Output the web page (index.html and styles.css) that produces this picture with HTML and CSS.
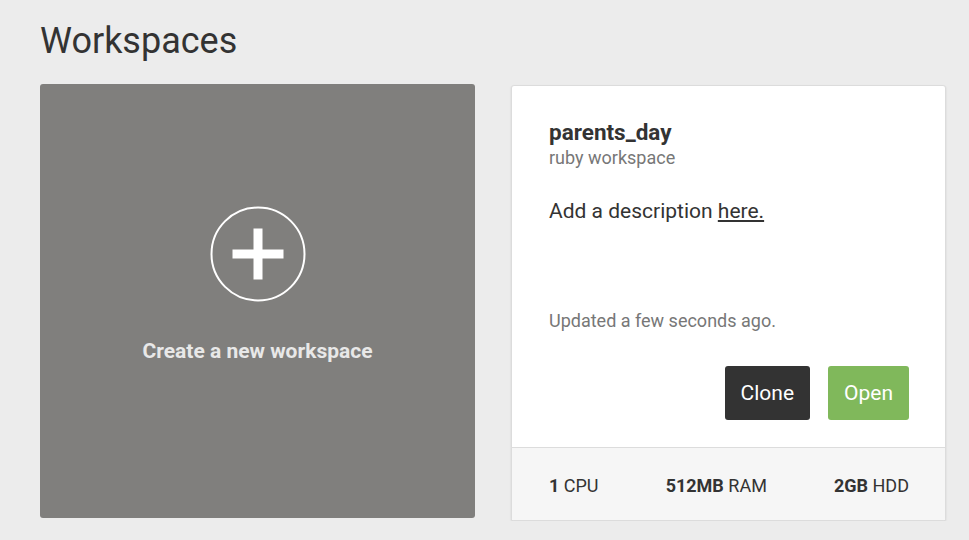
FILE: index.html
```html
<!DOCTYPE html>
<html lang="en">
  <head>
    <meta charset="UTF-8" />
    <meta name="viewport" content="width=device-width, initial-scale=1.0" />
    <title>Workspaces</title>
    <link rel="stylesheet" href="styles.css">
  </head>
  <body>
    <div class="page">
      <h1>Workspaces</h1>
      <div class="ws-grid">
        <a class="ws-new" href="#">
          <svg class="ws-new-icon" width="96" height="96" viewBox="0 0 96 96">
            <circle cx="48" cy="48" r="46.5" fill="none" stroke="#fff" stroke-width="2" />
            <rect x="22.5" y="43.5" width="51" height="9" fill="#fff" />
            <rect x="43.5" y="22.5" width="9" height="51" fill="#fff" />
          </svg>
          <span>Create a new workspace</span>
        </a>
        <div class="ws-card">
          <div class="ws-body">
            <div class="ws-name">parents_day</div>
            <div class="ws-type">ruby workspace</div>
            <p class="ws-desc">Add a description <a href="#">here.</a></p>
            <div class="ws-updated">Updated a few seconds ago.</div>
            <div class="ws-actions">
              <button class="btn btn-dark">Clone</button>
              <button class="btn btn-green">Open</button>
            </div>
          </div>
          <div class="ws-specs">
            <span><b>1</b> CPU</span>
            <span><b>512MB</b> RAM</span>
            <span><b>2GB</b> HDD</span>
          </div>
        </div>
      </div>
    </div>
  </body>
</html>
```

FILE: styles.css
```css
body {
  margin: 0;
  background: #ececec;
  font-family: Roboto, "Liberation Sans", Arial, sans-serif;
  color: #333;
}
.page {
  padding: 0 40px;
}
h1 {
  margin: 20px 0 22px;
  font-size: 36px;
  line-height: 42px;
  font-weight: 400;
  color: #333;
}
.ws-grid {
  display: grid;
  grid-template-columns: 435px 435px;
  gap: 36px;
}
.ws-new {
  height: 434px;
  background: #807f7d;
  border-radius: 3px;
  display: flex;
  flex-direction: column;
  align-items: center;
  justify-content: center;
  gap: 37px;
  padding-bottom: 33px;
  box-sizing: border-box;
  color: #e8e8e8;
  text-decoration: none;
  font-size: 21px;
  line-height: 24px;
  font-weight: 700;
}
.ws-card {
  margin-top: 1px;
  background: #fff;
  border: 1px solid #dcdcdc;
  border-radius: 3px;
  box-shadow: 0 1px 2px rgba(0, 0, 0, 0.12);
}
.ws-body {
  padding: 33px 36px 27px 37px;
}
.ws-name {
  font-size: 22.5px;
  line-height: 26px;
  font-weight: 700;
}
.ws-type {
  margin-top: 2px;
  font-size: 18px;
  line-height: 22px;
  color: #777;
}
.ws-desc {
  margin: 29px 0 0;
  font-size: 21px;
  line-height: 26px;
}
.ws-desc a {
  color: #333;
}
.ws-updated {
  margin-top: 86px;
  font-size: 18px;
  line-height: 22px;
  color: #777;
}
.ws-actions {
  margin-top: 34px;
  display: flex;
  justify-content: flex-end;
  gap: 18px;
}
.btn {
  height: 54px;
  padding: 0 16px;
  border: 0;
  border-radius: 3px;
  font-family: inherit;
  font-size: 21px;
  color: #fff;
}
.btn-dark {
  background: #333;
}
.btn-green {
  background: #80b85b;
}
.ws-specs {
  border-top: 1px solid #dcdcdc;
  background: #f6f6f6;
  padding: 27px 36px 23px 37px;
  display: flex;
  justify-content: space-between;
  font-size: 18px;
  line-height: 22px;
}
```
